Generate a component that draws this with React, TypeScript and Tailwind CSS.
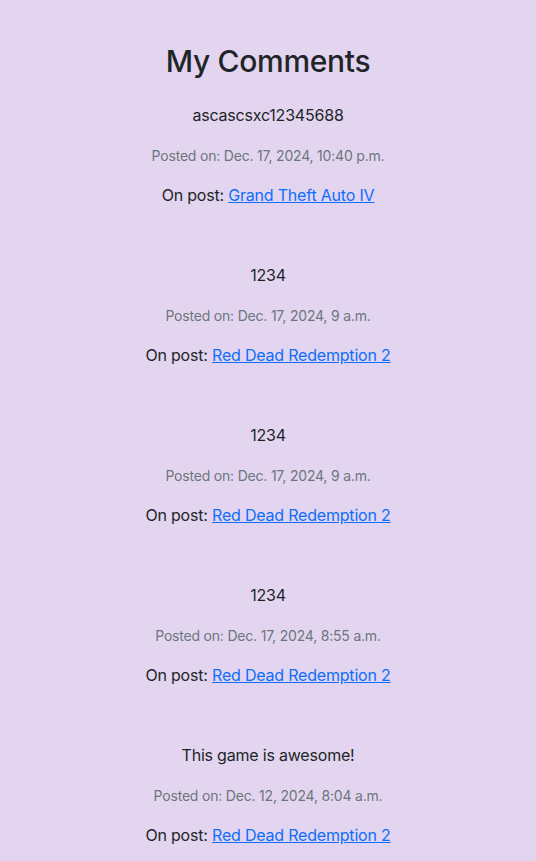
const comments = [
  { body: 'ascascsxc12345688', posted: 'Dec. 17, 2024, 10:40 p.m.', post: 'Grand Theft Auto IV' },
  { body: '1234', posted: 'Dec. 17, 2024, 9 a.m.', post: 'Red Dead Redemption 2' },
  { body: '1234', posted: 'Dec. 17, 2024, 9 a.m.', post: 'Red Dead Redemption 2' },
  { body: '1234', posted: 'Dec. 17, 2024, 8:55 a.m.', post: 'Red Dead Redemption 2' },
  { body: 'This game is awesome!', posted: 'Dec. 12, 2024, 8:04 a.m.', post: 'Red Dead Redemption 2' },
];

export default function App() {
  return (
    <div
      className="min-h-screen bg-[#e3d5ef] text-center text-[16px] leading-6 tracking-[-0.2px] text-[#212529]"
      style={{ fontFamily: 'Inter, "Noto Sans", sans-serif' }}
    >
      <h2 className="pt-[42px] text-[30px] font-medium leading-[38px] tracking-[-0.3px]">My Comments</h2>
      <div className="mt-[23px]">
        {comments.map((c, i) => (
          <div key={i} className="h-[160px]">
            <p className="mb-4 h-6">{c.body}</p>
            <p className="mb-4 h-6 pt-[2px] text-[14px] leading-[22px] text-[#6c757d]">Posted on: {c.posted}</p>
            <p className="mb-4 h-6">
              On post:{' '}
              <a href="#" className="text-[#0d6efd] underline">
                {c.post}
              </a>
            </p>
          </div>
        ))}
      </div>
    </div>
  );
}
